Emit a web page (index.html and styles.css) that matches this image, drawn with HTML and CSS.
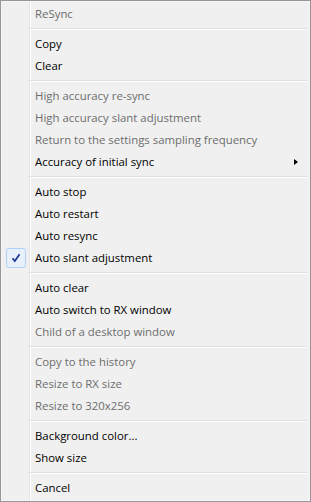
FILE: index.html
```html
<!DOCTYPE html>
<html lang="en">
<head>
    <meta charset="UTF-8">
    <title>Context menu</title>
    <link rel="stylesheet" href="styles.css">
</head>
<body>

    <!-- Popup menu -->
    <ul class="menu">
        <li class="item disabled">ReSync</li>
        <li class="sep"></li>
        <li class="item">Copy</li>
        <li class="item">Clear</li>
        <li class="sep"></li>
        <li class="item disabled">High accuracy re-sync</li>
        <li class="item disabled">High accuracy slant adjustment</li>
        <li class="item disabled">Return to the settings sampling frequency</li>
        <li class="item submenu">Accuracy of initial sync</li>
        <li class="sep"></li>
        <li class="item">Auto stop</li>
        <li class="item">Auto restart</li>
        <li class="item">Auto resync</li>
        <li class="item checked">
            <span class="check">
                <svg width="10" height="10" viewBox="0 0 10 10"><path d="M1.5 5.2 L3.8 8 L8.6 1.2" fill="none" stroke="#1d3593" stroke-width="1.7"/></svg>
            </span>
            Auto slant adjustment
        </li>
        <li class="sep"></li>
        <li class="item">Auto clear</li>
        <li class="item">Auto switch to RX window</li>
        <li class="item disabled">Child of a desktop window</li>
        <li class="sep"></li>
        <li class="item disabled">Copy to the history</li>
        <li class="item disabled">Resize to RX size</li>
        <li class="item disabled">Resize to 320x256</li>
        <li class="sep"></li>
        <li class="item">Background color...</li>
        <li class="item">Show size</li>
        <li class="sep"></li>
        <li class="item">Cancel</li>
    </ul>

</body>
</html>
```

FILE: styles.css
```css
* {
    margin: 0;
    padding: 0;
    box-sizing: border-box;
}

body {
    font-family: 'Open Sans', 'Noto Sans', sans-serif;
    font-size: 11.4px;
    background-color: #fff;
}

.menu {
    list-style: none;
    width: 311px;
    height: 502px;
    padding: 2px;
    border: 1px solid #979797;
    background-color: #f0f0f0;
    /* gutter line next to the check column */
    background-image: linear-gradient(to right, transparent 28px, #e2e3e3 28px, #e2e3e3 29px, #fff 29px, #fff 30px, transparent 30px);
    background-origin: padding-box;
    box-shadow: inset 0 0 0 1px #f5f5f5;
}

.item {
    position: relative;
    height: 22px;
    line-height: 22px;
    padding-left: 32px;
    color: #000;
    white-space: nowrap;
}

.item.disabled {
    color: #6d6d6d;
}

.sep {
    height: 8px;
    margin: 0 1px 0 27px;
    padding-top: 3px;
}

.sep::before {
    content: "";
    display: block;
    height: 1px;
    background-color: #e0e0e0;
    border-bottom: 1px solid #fff;
    box-sizing: content-box;
}

.submenu::after {
    content: "";
    position: absolute;
    right: 10px;
    top: 8px;
    border-left: 4px solid #000;
    border-top: 3.5px solid transparent;
    border-bottom: 3.5px solid transparent;
}

.check {
    position: absolute;
    left: 3px;
    top: 1px;
    width: 20px;
    height: 20px;
    border: 1px solid #aecff7;
    border-radius: 3px;
    background-color: #e8f0fb;
    display: flex;
    align-items: center;
    justify-content: center;
}
```
